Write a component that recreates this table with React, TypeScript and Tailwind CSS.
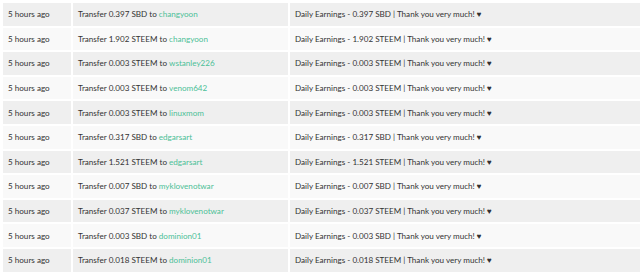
const rows = [
  { amount: "0.397 SBD", to: "changyoon" },
  { amount: "1.902 STEEM", to: "changyoon" },
  { amount: "0.003 STEEM", to: "wstanley226" },
  { amount: "0.003 STEEM", to: "venom642" },
  { amount: "0.003 STEEM", to: "linuxmom" },
  { amount: "0.317 SBD", to: "edgarsart" },
  { amount: "1.521 STEEM", to: "edgarsart" },
  { amount: "0.007 SBD", to: "myklovenotwar" },
  { amount: "0.037 STEEM", to: "myklovenotwar" },
  { amount: "0.003 SBD", to: "dominion01" },
  { amount: "0.018 STEEM", to: "dominion01" },
];

export default function App() {
  return (
    <div className="w-[640px] h-[274px] overflow-hidden bg-white pt-[3px] pl-[3px] font-['Lato',sans-serif] text-[8.1px] text-[#333]">
      <div className="flex flex-col gap-[2px]">
        {rows.map((row, i) => {
          const bg = i % 2 === 0 ? "bg-[#efefef]" : "bg-[#f9f9f9]";
          return (
            <div key={i} className="flex gap-[2px] h-[22.6px]">
              <div className={`w-[68px] shrink-0 flex items-center pl-[5px] ${bg}`}>5 hours ago</div>
              <div className={`w-[215px] shrink-0 flex items-center pl-[5px] whitespace-nowrap ${bg}`}>
                Transfer {row.amount} to&nbsp;<span className="text-[#4cbf97]">{row.to}</span>
              </div>
              <div className={`flex-1 flex items-center pl-[5px] whitespace-nowrap ${bg}`}>
                Daily Earnings - {row.amount} | Thank you very much! ♥
              </div>
            </div>
          );
        })}
      </div>
    </div>
  );
}
